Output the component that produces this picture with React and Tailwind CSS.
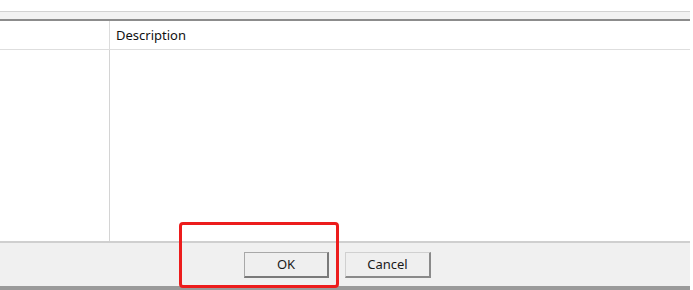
export default function App() {
  return (
    <div className="relative w-[693px] h-[290px] bg-white overflow-hidden font-['Noto_Sans',sans-serif]">
      <div className="w-[690px] flex flex-col h-full">
        {/* top panel edge */}
        <div className="h-[11px]" />
        <div className="h-px bg-[#d2d2d2]" />
        <div className="h-[7px] bg-[#f2f2f2]" />
        <div className="h-[2px] bg-[#8c8c8c]" />

        {/* list view */}
        <div className="flex-1 flex flex-col">
          <div className="flex h-[29px] border-b border-[#dedede]">
            <div className="w-[110px] border-r border-[#dcdcdc]" />
            <div className="flex items-center pl-[6px] pt-[2px] text-[13px] text-[#111]">
              Description
            </div>
          </div>
          <div className="flex flex-1">
            <div className="w-[110px] border-r border-[#d4d4d4]" />
            <div className="flex-1" />
          </div>
        </div>

        {/* footer with buttons */}
        <div className="h-[45px] border-t-2 border-[#cfcfcf] bg-[#f0f0f0] flex items-start pt-[9px] pl-[244px] gap-[16px]">
          <button className="w-[85px] h-[26px] bg-[#efefef] border border-[#a8a8a8] border-r-2 border-b-2 border-r-[#7a7a7a] border-b-[#7a7a7a] text-[13px] text-[#1a1a1a]">
            OK
          </button>
          <button className="w-[86px] h-[26px] bg-[#efefef] border border-[#d0d0d0] border-r-2 border-b-2 border-r-[#8a8a8a] border-b-[#8a8a8a] text-[13px] text-[#1a1a1a]">
            Cancel
          </button>
        </div>
        <div className="h-[4px] bg-[#9a9a9a]" />
      </div>

      {/* highlight annotation */}
      <div className="absolute left-[179px] top-[222px] w-[160px] h-[66px] border-[3px] border-[#ec1c1c] rounded-[4px]" />
    </div>
  );
}
